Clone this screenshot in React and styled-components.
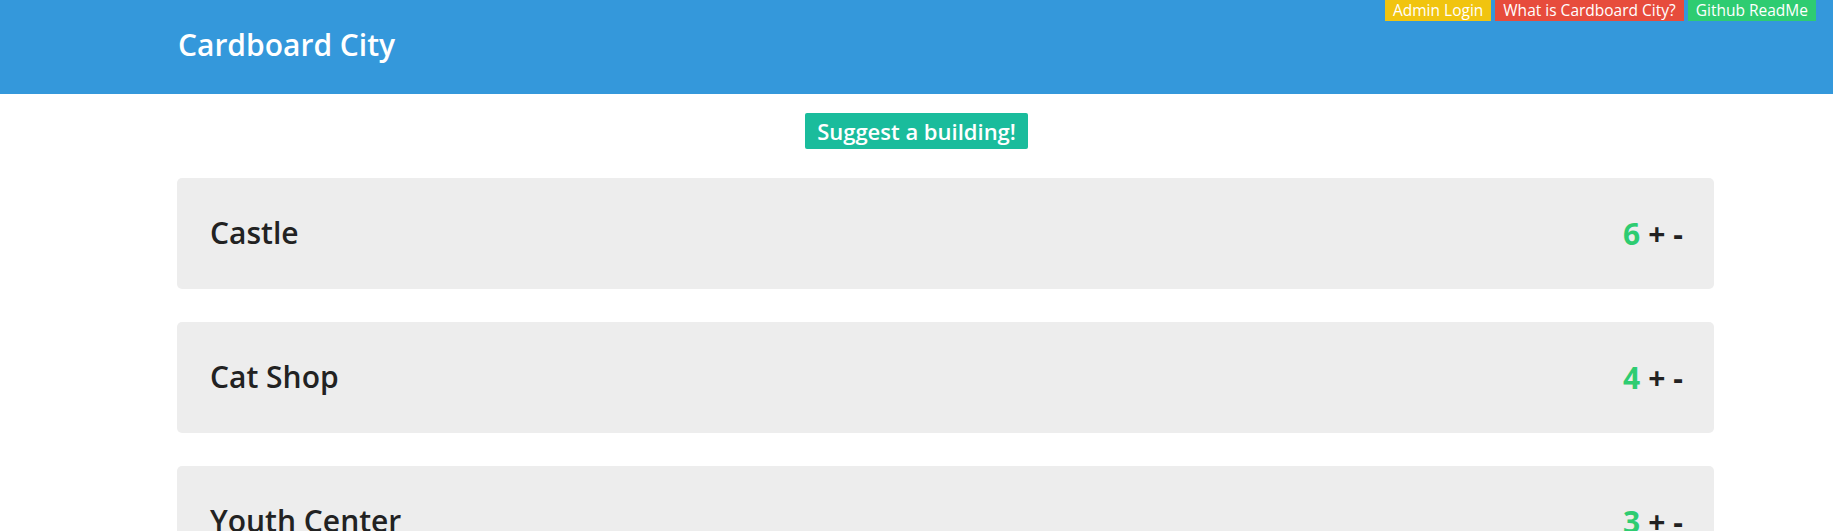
import styled, { createGlobalStyle } from "styled-components";

const GlobalStyle = createGlobalStyle`
body{
  margin:0;
  background:#fff;
  font-family:"Open Sans", "Noto Sans", sans-serif;
  overflow:hidden;
}
`

const Header = styled.header`
display:flex;
justify-content:space-between;
height:94px;
background:#3498db;
padding-left:178px;
padding-right:17px;
box-sizing:border-box;
`
const Titulo = styled.h1`
margin:0 0 5px;
align-self:center;
color:white;
font-size:30px;
font-weight:600;
`
const Links = styled.div`
display:flex;
gap:4px;
align-self:flex-start;
`
const LinkBtn = styled.a`
display:block;
height:21px;
line-height:20px;
padding:0 8px;
font-size:15.5px;
color:white;
background:${(p) => p.$cor};
text-decoration:none;
cursor:pointer;
`
const Topo = styled.div`
display:flex;
justify-content:center;
padding:19px 0 29px;
`
const Sugerir = styled.button`
height:36px;
padding:0 12px;
border:none;
border-radius:2px;
background:#1abc9c;
color:white;
font-family:inherit;
font-size:22px;
font-weight:600;
cursor:pointer;
`
const Lista = styled.div`
display:flex;
flex-direction:column;
gap:33px;
padding:0 119px 0 177px;
`
const Card = styled.div`
display:flex;
align-items:center;
justify-content:space-between;
height:111px;
padding:0 31px 0 33px;
background:#ededed;
border-radius:5px;
box-sizing:border-box;
`
const Nome = styled.h2`
margin:0 0 2px;
font-size:30px;
font-weight:600;
color:#222;
`
const Votos = styled.div`
display:flex;
gap:8px;
font-size:30px;
font-weight:700;
color:#222;
`
const Numero = styled.span`
color:#2ecc71;
`
const Voto = styled.span`
cursor:pointer;
`

const predios = [
  { nome: "Castle", votos: 6 },
  { nome: "Cat Shop", votos: 4 },
  { nome: "Youth Center", votos: 3 },
]

function App(){
    return(
        <div>
        <GlobalStyle/>
        <Header>
            <Titulo>Cardboard City</Titulo>
            <Links>
                <LinkBtn $cor="#f1c40f">Admin Login</LinkBtn>
                <LinkBtn $cor="#e74c3c">What is Cardboard City?</LinkBtn>
                <LinkBtn $cor="#2ecc71">Github ReadMe</LinkBtn>
            </Links>
        </Header>

        <Topo>
            <Sugerir>Suggest a building!</Sugerir>
        </Topo>

        <Lista>
            {predios.map((p) => (
                <Card key={p.nome}>
                    <Nome>{p.nome}</Nome>
                    <Votos>
                        <Numero>{p.votos}</Numero>
                        <Voto>+</Voto>
                        <Voto>-</Voto>
                    </Votos>
                </Card>
            ))}
        </Lista>
        </div>
    )
}

export default App;
